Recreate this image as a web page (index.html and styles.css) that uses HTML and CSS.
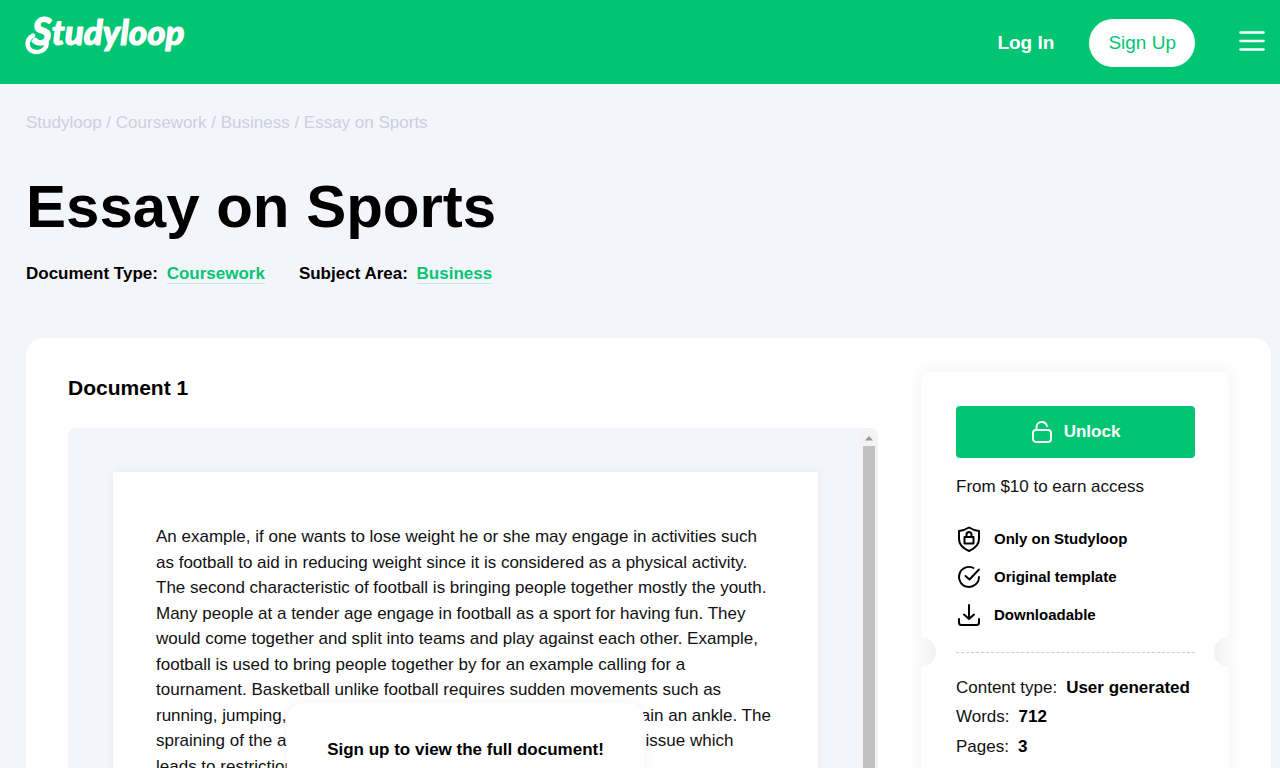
FILE: index.html
```html
<!DOCTYPE html>
<html lang="en">
<head>
<meta charset="utf-8">
<meta name="viewport" content="width=device-width, initial-scale=1">
<title>Essay on Sports - Studyloop</title>
<link rel="stylesheet" href="styles.css">
</head>
<body>
<header class="topbar">
  <a class="logo" href="#" aria-label="Studyloop">
    <svg width="164" height="60" viewBox="0 0 164 60">
      <path d="M8 23.500C0 28 1 40 11.500 40 20 40 23 33 21 28" fill="none" stroke="#fff" stroke-width="4.500" stroke-linecap="round"/>
      <text class="logo-text" x="7" y="33"><tspan class="logo-initial">S</tspan>tudyloop</text>
    </svg>
  </a>
  <nav class="account">
    <a class="login" href="#">Log In</a>
    <a class="signup" href="#">Sign Up</a>
    <button class="menu" type="button" aria-label="Menu">
      <svg width="26" height="22" viewBox="0 0 26 22" fill="none" stroke="#fff" stroke-width="2.6" stroke-linecap="round"><path d="M1.5 2.5h23M1.5 11h23M1.5 19.5h23"/></svg>
    </button>
  </nav>
</header>
<main class="container">
  <nav class="crumbs" aria-label="Breadcrumb"><a href="#">Studyloop</a> / <a href="#">Coursework</a> / <a href="#">Business</a> / <span>Essay on Sports</span></nav>
  <h1>Essay on Sports</h1>
  <div class="meta">
    <p>Document Type: <a href="#">Coursework</a></p>
    <p>Subject Area: <a href="#">Business</a></p>
  </div>
  <div class="card">
    <section class="document">
      <h2>Document 1</h2>
      <div class="viewer">
        <div class="canvas">
          <article class="page">
            <p>An example, if one wants to lose weight he or she may engage in activities such as football to aid in reducing weight since it is considered as a physical activity. The second characteristic of football is bringing people together mostly the youth. Many people at a tender age engage in football as a sport for having fun. They would come together and split into teams and play against each other. Example, football is used to bring people together by for an example calling for a tournament. Basketball unlike football requires sudden movements such as running, jumping, and bouncing which may cause a player to sprain an ankle. The spraining of the ankle is an injury and can become a real serious issue which leads to restriction of movement for the player.</p>
            <div class="prompt"><strong>Sign up to view the full document!</strong></div>
          </article>
        </div>
        <div class="scrollbar">
          <svg width="10" height="6" viewBox="0 0 10 6"><path d="M1 5.5 5 1l4 4.5z" fill="#999"/></svg>
          <div class="thumb"></div>
        </div>
      </div>
    </section>
    <aside class="ticket">
      <button class="unlock" type="button">
        <svg width="22" height="24" viewBox="0 0 22 24" fill="none" stroke="#fff" stroke-width="1.8" stroke-linecap="round"><rect x="2" y="10" width="18" height="12" rx="3"/><path d="M5.500 10V7.200C5.500 4.100 7.800 2 10.700 2c2.700 0 4.700 1.600 5.300 4.200"/></svg>
        Unlock
      </button>
      <p class="price">From $10 to earn access</p>
      <ul class="perks">
        <li><svg width="26" height="26" viewBox="0 0 26 26" fill="none" stroke="#000" stroke-width="2" stroke-linejoin="round"><path d="M13 1.500C10 3.400 6.500 4.600 3 5v8c0 5.500 4 9.500 10 12 6-2.500 10-6.500 10-12V5c-3.500-.4-7-1.600-10-3.500z"/><path d="M8.500 11h9v6.500h-9zM10.500 11V8.500a2.500 2.500 0 0 1 5 0V11"/></svg>Only on Studyloop</li>
        <li><svg width="26" height="26" viewBox="0 0 26 26" fill="none" stroke="#000" stroke-width="1.900" stroke-linecap="round" stroke-linejoin="round"><path d="M17.500 4A10 10 0 1 0 23 13M9.500 12l4 3.500L23 5.500"/></svg>Original template</li>
        <li><svg width="26" height="26" viewBox="0 0 26 26" fill="none" stroke="#000" stroke-width="2" stroke-linecap="round" stroke-linejoin="round"><path d="M13 3v14M8 12.500l5 4.500 5-4.500M3 17v3.500Q3 23 5.500 23h15q2.500 0 2.500-2.500V17"/></svg>Downloadable</li>
      </ul>
      <div class="tear"></div>
      <dl class="facts">
        <div><dt>Content type:</dt><dd>User generated</dd></div>
        <div><dt>Words:</dt><dd>712</dd></div>
        <div><dt>Pages:</dt><dd>3</dd></div>
      </dl>
    </aside>
  </div>
</main>
</body>
</html>
```
FILE: styles.css
```css
* { box-sizing: border-box; }
body {
  margin: 0;
  background: #f4f5fb;
  color: #000;
  font: 17px/1.5 "Liberation Sans", Arial, sans-serif;
}
h1, h2, p, ul, dl, dd { margin: 0; padding: 0; }
a { color: inherit; text-decoration: none; }
svg { display: block; flex: none; }
button { border: 0; padding: 0; background: none; color: inherit; font: inherit; cursor: pointer; }

.topbar {
  display: flex;
  justify-content: space-between;
  align-items: center;
  height: 84px;
  padding: 0 15px 0 25px;
  background: #02c573;
  color: #fff;
}
.logo svg { overflow: visible; }
.logo-text {
  fill: #fff;
  stroke: #fff;
  stroke-width: 1px;
  stroke-linejoin: round;
  font: italic 900 35px Lato, sans-serif;
}
.logo-initial { font-size: 38px; }
.account { display: flex; align-items: center; padding-top: 2px; font-size: 19px; }
.login { margin-right: 35px; font-weight: bold; }
.signup {
  margin-right: 44px;
  padding: 0 19px;
  border-radius: 24px;
  background: #fff;
  color: #02c573;
  line-height: 48px;
}
.menu { margin-bottom: 5px; }

.container { padding: 26px 9px 40px 26px; }
.crumbs { color: #cacfe0; }
h1 { margin-top: 39px; font-size: 60px; line-height: 64px; }
.meta { display: flex; gap: 34px; margin-top: 22px; font-weight: bold; }
.meta a {
  margin-left: 4px;
  border-bottom: 1px solid #c8e6df;
  color: #02c573;
}
.card {
  display: flex;
  gap: 43px;
  align-items: flex-start;
  margin-top: 52px;
  padding: 34px 42px 43px;
  border-radius: 17px;
  background: #fff;
}
.document { flex: 1; min-width: 0; }
h2 { font-size: 21px; line-height: 32px; }
.viewer {
  display: flex;
  margin-top: 24px;
  border-radius: 8px;
  background: #f4f5fb;
  overflow: hidden;
}
.canvas { flex: 1; padding: 44px 43px 44px 45px; }
.page {
  position: relative;
  min-height: 400px;
  padding: 52px 43px;
  background: #fff;
  box-shadow: 0 0 9px rgba(0, 0, 0, .06);
  color: #111;
}
.prompt {
  position: absolute;
  top: 231px;
  left: 50%;
  transform: translateX(-50%);
  padding: 34px 41px 80px;
  border-radius: 17px;
  background: #fff;
  box-shadow: 0 0 9px rgba(0, 0, 0, .05);
  color: #000;
  white-space: nowrap;
}
.scrollbar {
  display: flex;
  flex-direction: column;
  align-items: center;
  gap: 5px;
  width: 17px;
  padding: 7px 3px 0 2px;
  background: #f3f3f5;
}
.thumb { flex: 1; width: 100%; background: #c1c1c1; }

.ticket {
  width: 308px;
  padding: 34px 34px 40px 35px;
  border-radius: 8px;
  background: #fff;
  box-shadow: 0 0 17px rgba(0, 0, 0, .06);
}
.unlock {
  display: flex;
  justify-content: center;
  align-items: center;
  gap: 11px;
  width: 100%;
  height: 52px;
  border-radius: 4px;
  background: #02c573;
  color: #fff;
  font-weight: bold;
}
.price { margin-top: 16px; color: #111; }
.perks { display: grid; gap: 12px; margin-top: 26px; list-style: none; }
.perks li {
  display: flex;
  align-items: center;
  gap: 12px;
  font-size: 15px;
  font-weight: bold;
  line-height: 26px;
}
.tear {
  position: relative;
  margin-top: 24px;
  border-top: 1px dashed #ccc;
}
.tear::before, .tear::after {
  content: "";
  position: absolute;
  top: -16px;
  width: 30px;
  height: 30px;
  border-radius: 50%;
}
.tear::before { left: -50px; background: linear-gradient(to right, #fff 20%, #f1f1f1); }
.tear::after { right: -49px; background: linear-gradient(to left, #fff 20%, #f1f1f1); }
.facts { display: grid; gap: 4px; margin-top: 22px; }
.facts div { display: flex; gap: 9px; }
.facts dt { color: #111; }
.facts dd { font-weight: bold; white-space: nowrap; }
```
